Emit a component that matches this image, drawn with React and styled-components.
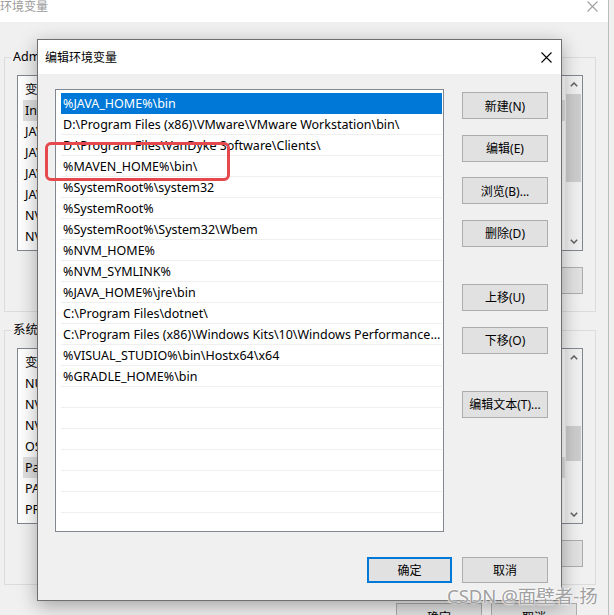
import React from "react";
import styled, { createGlobalStyle } from "styled-components";

const uiFont = `"Noto Sans", "Noto Sans CJK SC", sans-serif`;

const GlobalStyle = createGlobalStyle`
  html, body {
    margin: 0;
    padding: 0;
    background: #f0f0f0;
  }
  body {
    font-family: ${uiFont};
    font-size: 12px;
    color: #000;
  }
  * {
    box-sizing: border-box;
  }
`;

const pathList = [
  "%JAVA_HOME%\\bin",
  "D:\\Program Files (x86)\\VMware\\VMware Workstation\\bin\\",
  "D:\\Program Files\\VanDyke Software\\Clients\\",
  "%MAVEN_HOME%\\bin\\",
  "%SystemRoot%\\system32",
  "%SystemRoot%",
  "%SystemRoot%\\System32\\Wbem",
  "%NVM_HOME%",
  "%NVM_SYMLINK%",
  "%JAVA_HOME%\\jre\\bin",
  "C:\\Program Files\\dotnet\\",
  "C:\\Program Files (x86)\\Windows Kits\\10\\Windows Performance ...",
  "%VISUAL_STUDIO%\\bin\\Hostx64\\x64",
  "%GRADLE_HOME%\\bin",
  "", "", "", "", "", "", "",
];

const userVars = ["IntelliJ IDEA", "JAVA_HOME", "JAVA_HOME8", "JAVA_HOME11", "JAVA_HOME17", "NVM_HOME", "NVM_SYMLINK"];
const sysVars = ["NUMBER_OF_PROCESSORS", "NVM_HOME", "NVM_SYMLINK", "OS", "Path", "PATHEXT", "PROCESSOR_ARCHITECTURE"];

function CloseIcon({ color }) {
  return (
    <svg width="11" height="11" viewBox="0 0 11 11">
      <path d="M0.5 0.5 L10.5 10.5 M10.5 0.5 L0.5 10.5" stroke={color} strokeWidth="1.1" fill="none" />
    </svg>
  );
}

function Chevron({ up }) {
  return (
    <svg width="8" height="5" viewBox="0 0 8 5">
      <path d={up ? "M0.8 4.2 L4 1 L7.2 4.2" : "M0.8 0.8 L4 4 L7.2 0.8"} stroke="#606060" strokeWidth="1.5" fill="none" />
    </svg>
  );
}

function VarList({ names, highlight, thumbTop, thumbSize }) {
  return (
    <BgList>
      <div>
        <BgHeader>
          <NameCell>变量</NameCell>
          <span>值</span>
        </BgHeader>
        {names.map((n, i) => (
          <BgRow key={n + i} $active={i === highlight}>
            <NameCell>{n}</NameCell>
          </BgRow>
        ))}
      </div>
      <ScrollBar>
        <ArrowBox><Chevron up /></ArrowBox>
        <Track>
          <Thumb $top={thumbTop} $size={thumbSize} />
        </Track>
        <ArrowBox><Chevron /></ArrowBox>
      </ScrollBar>
    </BgList>
  );
}

export default function App() {
  return (
    <>
      <GlobalStyle />
      <Desktop>
        <BgWindow>
          <BgTitleBar>
            <span>环境变量</span>
            <CloseIcon color="#a0a0a0" />
          </BgTitleBar>
          <BgBody>
            <Group $top={27}>
              <GroupLabel>Administrator 的用户变量(U)</GroupLabel>
              <VarList names={userVars} highlight={0} thumbTop={1} thumbSize={88} />
              <BgButtonRow>
                <BgButton>新建(N)...</BgButton>
                <BgButton>编辑(E)...</BgButton>
                <BgButton>删除(D)</BgButton>
              </BgButtonRow>
            </Group>
            <Group $top={10}>
              <GroupLabel>系统变量(S)</GroupLabel>
              <VarList names={sysVars} highlight={4} thumbTop={60} thumbSize={35} />
              <BgButtonRow>
                <BgButton>新建(W)...</BgButton>
                <BgButton>编辑(I)...</BgButton>
                <BgButton>删除(L)</BgButton>
              </BgButtonRow>
            </Group>
            <BgFooter>
              <BgButton>确定</BgButton>
              <BgButton>取消</BgButton>
            </BgFooter>
          </BgBody>
        </BgWindow>

        <Dialog>
          <DialogTitleBar>
            <span>编辑环境变量</span>
            <CloseIcon color="#000" />
          </DialogTitleBar>
          <DialogBody>
            <MainRow>
              <PathList>
                {pathList.map((p, i) => (
                  <PathRow key={i} $selected={i === 0}>{p}</PathRow>
                ))}
              </PathList>
              <SideButtons>
                <SideButton>新建(N)</SideButton>
                <SideButton>编辑(E)</SideButton>
                <SideButton>浏览(B)...</SideButton>
                <SideButton>删除(D)</SideButton>
                <SideButton $spaced>上移(U)</SideButton>
                <SideButton>下移(O)</SideButton>
                <SideButton $spaced>编辑文本(T)...</SideButton>
              </SideButtons>
            </MainRow>
            <DialogFooter>
              <FooterButton $primary>确定</FooterButton>
              <FooterButton>取消</FooterButton>
            </DialogFooter>
          </DialogBody>
        </Dialog>

        <RedMark />
        <Watermark>CSDN @面壁者-扬</Watermark>
      </Desktop>
    </>
  );
}

/*
desktop + background window
*/
const Desktop = styled.div`
  position: relative;
  width: 614px;
  height: 615px;
  overflow: hidden;
  background: #f0f0f0;
`;

const BgWindow = styled.div`
  position: absolute;
  left: -2px;
  top: -10px;
  width: 611px;
  height: 650px;
  background: #f0f0f0;
  border-right: 1px solid #bcbcbc;
  display: flex;
  flex-direction: column;
`;

const BgTitleBar = styled.div`
  height: 32px;
  flex-shrink: 0;
  background: #fff;
  color: #9a9a9a;
  font-size: 12px;
  display: flex;
  align-items: center;
  justify-content: space-between;
  padding: 0 10px 0 2px;
`;

const BgBody = styled.div`
  padding: 0 12px 0 6px;
  display: flex;
  flex-direction: column;
`;

const Group = styled.fieldset`
  margin: ${p => p.$top}px 0 0;
  min-width: 0;
  border: 1px solid #dcdcdc;
  padding: 10px 12px 17px;
`;

const GroupLabel = styled.legend`
  margin-left: -6px;
  padding: 0 2px;
  line-height: 16px;
  font-size: 12.5px;
`;

const BgList = styled.div`
  height: 176px;
  border: 1px solid #828790;
  background: #fff;
  display: grid;
  grid-template-columns: 1fr 17px;
  overflow: hidden;
  font-size: 12.5px;
`;

const BgHeader = styled.div`
  height: 24px;
  display: flex;
  align-items: center;
  padding-left: 7px;
`;

const BgRow = styled.div`
  height: 21px;
  display: flex;
  align-items: center;
  margin-left: 5px;
  padding-left: 2px;
  background: ${p => (p.$active ? "#e0e0e0" : "transparent")};
`;

const NameCell = styled.span`
  width: 190px;
  white-space: nowrap;
`;

const ScrollBar = styled.div`
  background: #f0f0f0;
  display: flex;
  flex-direction: column;
`;

const ArrowBox = styled.div`
  height: 17px;
  display: flex;
  align-items: center;
  justify-content: center;
`;

const Track = styled.div`
  flex: 1;
`;

const Thumb = styled.div`
  margin: ${p => p.$top}px 0 0 1px;
  width: 15px;
  height: ${p => p.$size}px;
  background: #cdcdcd;
`;

const BgButtonRow = styled.div`
  margin-top: 16px;
  display: flex;
  justify-content: flex-end;
  gap: 10px;
`;

const BgButton = styled.div`
  width: 86px;
  height: 27px;
  background: #e1e1e1;
  border: 1px solid #adadad;
  display: flex;
  align-items: center;
  justify-content: center;
`;

const BgFooter = styled.div`
  margin-top: 18px;
  padding-right: 19px;
  display: flex;
  justify-content: flex-end;
  gap: 9px;
`;

/*
edit dialog
*/
const Dialog = styled.div`
  position: absolute;
  left: 37px;
  top: 39px;
  width: 525px;
  height: 562px;
  border: 1px solid #6f6f6f;
  background: #f0f0f0;
  box-shadow: 0 5px 18px rgba(0, 0, 0, 0.32);
  display: flex;
  flex-direction: column;
`;

const DialogTitleBar = styled.div`
  height: 34px;
  flex-shrink: 0;
  background: #fff;
  display: flex;
  align-items: center;
  justify-content: space-between;
  padding: 0 9px 0 7px;
  font-size: 12px;
`;

const DialogBody = styled.div`
  flex: 1;
  padding: 15px 13px 17px 17px;
  display: flex;
  flex-direction: column;
`;

const MainRow = styled.div`
  display: flex;
  gap: 18px;
  height: 443px;
`;

const PathList = styled.div`
  width: 389px;
  height: 443px;
  border: 1px solid #828790;
  background: #fff;
  padding: 3px 1px 0 5px;
  overflow: hidden;
  font-size: 12.5px;
`;

const PathRow = styled.div`
  height: 21px;
  line-height: 21px;
  padding-left: 2px;
  border-bottom: 1px solid ${p => (p.$selected ? "#0078d7" : "#efefef")};
  background: ${p => (p.$selected ? "#0078d7" : "transparent")};
  color: ${p => (p.$selected ? "#fff" : "#000")};
  white-space: nowrap;
  overflow: hidden;
  text-overflow: ellipsis;
`;

const SideButtons = styled.div`
  width: 86px;
  padding-top: 3px;
  display: flex;
  flex-direction: column;
  gap: 15.67px;
`;

const SideButton = styled.div`
  height: 27px;
  flex-shrink: 0;
  margin-top: ${p => (p.$spaced ? "21.33px" : "0")};
  background: #e1e1e1;
  border: 1px solid #adadad;
  display: flex;
  align-items: center;
  justify-content: center;
`;

const DialogFooter = styled.div`
  margin-top: 25px;
  display: flex;
  justify-content: flex-end;
  gap: 10px;
`;

const FooterButton = styled.div`
  width: ${p => (p.$primary ? "85px" : "86px")};
  height: 26px;
  background: #e1e1e1;
  border: ${p => (p.$primary ? "2px solid #0078d7" : "1px solid #adadad")};
  display: flex;
  align-items: center;
  justify-content: center;
`;

/*
annotation overlays
*/
const RedMark = styled.div`
  position: absolute;
  left: 45px;
  top: 142px;
  width: 185px;
  height: 39px;
  border: 3px solid #e5484d;
  border-radius: 6px;
`;

const Watermark = styled.div`
  position: absolute;
  left: 447px;
  top: 585px;
  font-size: 18.5px;
  line-height: 22px;
  color: #a0a0a0;
  white-space: nowrap;
  text-shadow: 0 0 2px #fff, 0 0 2px #fff, 0 0 1px #fff;
`;
